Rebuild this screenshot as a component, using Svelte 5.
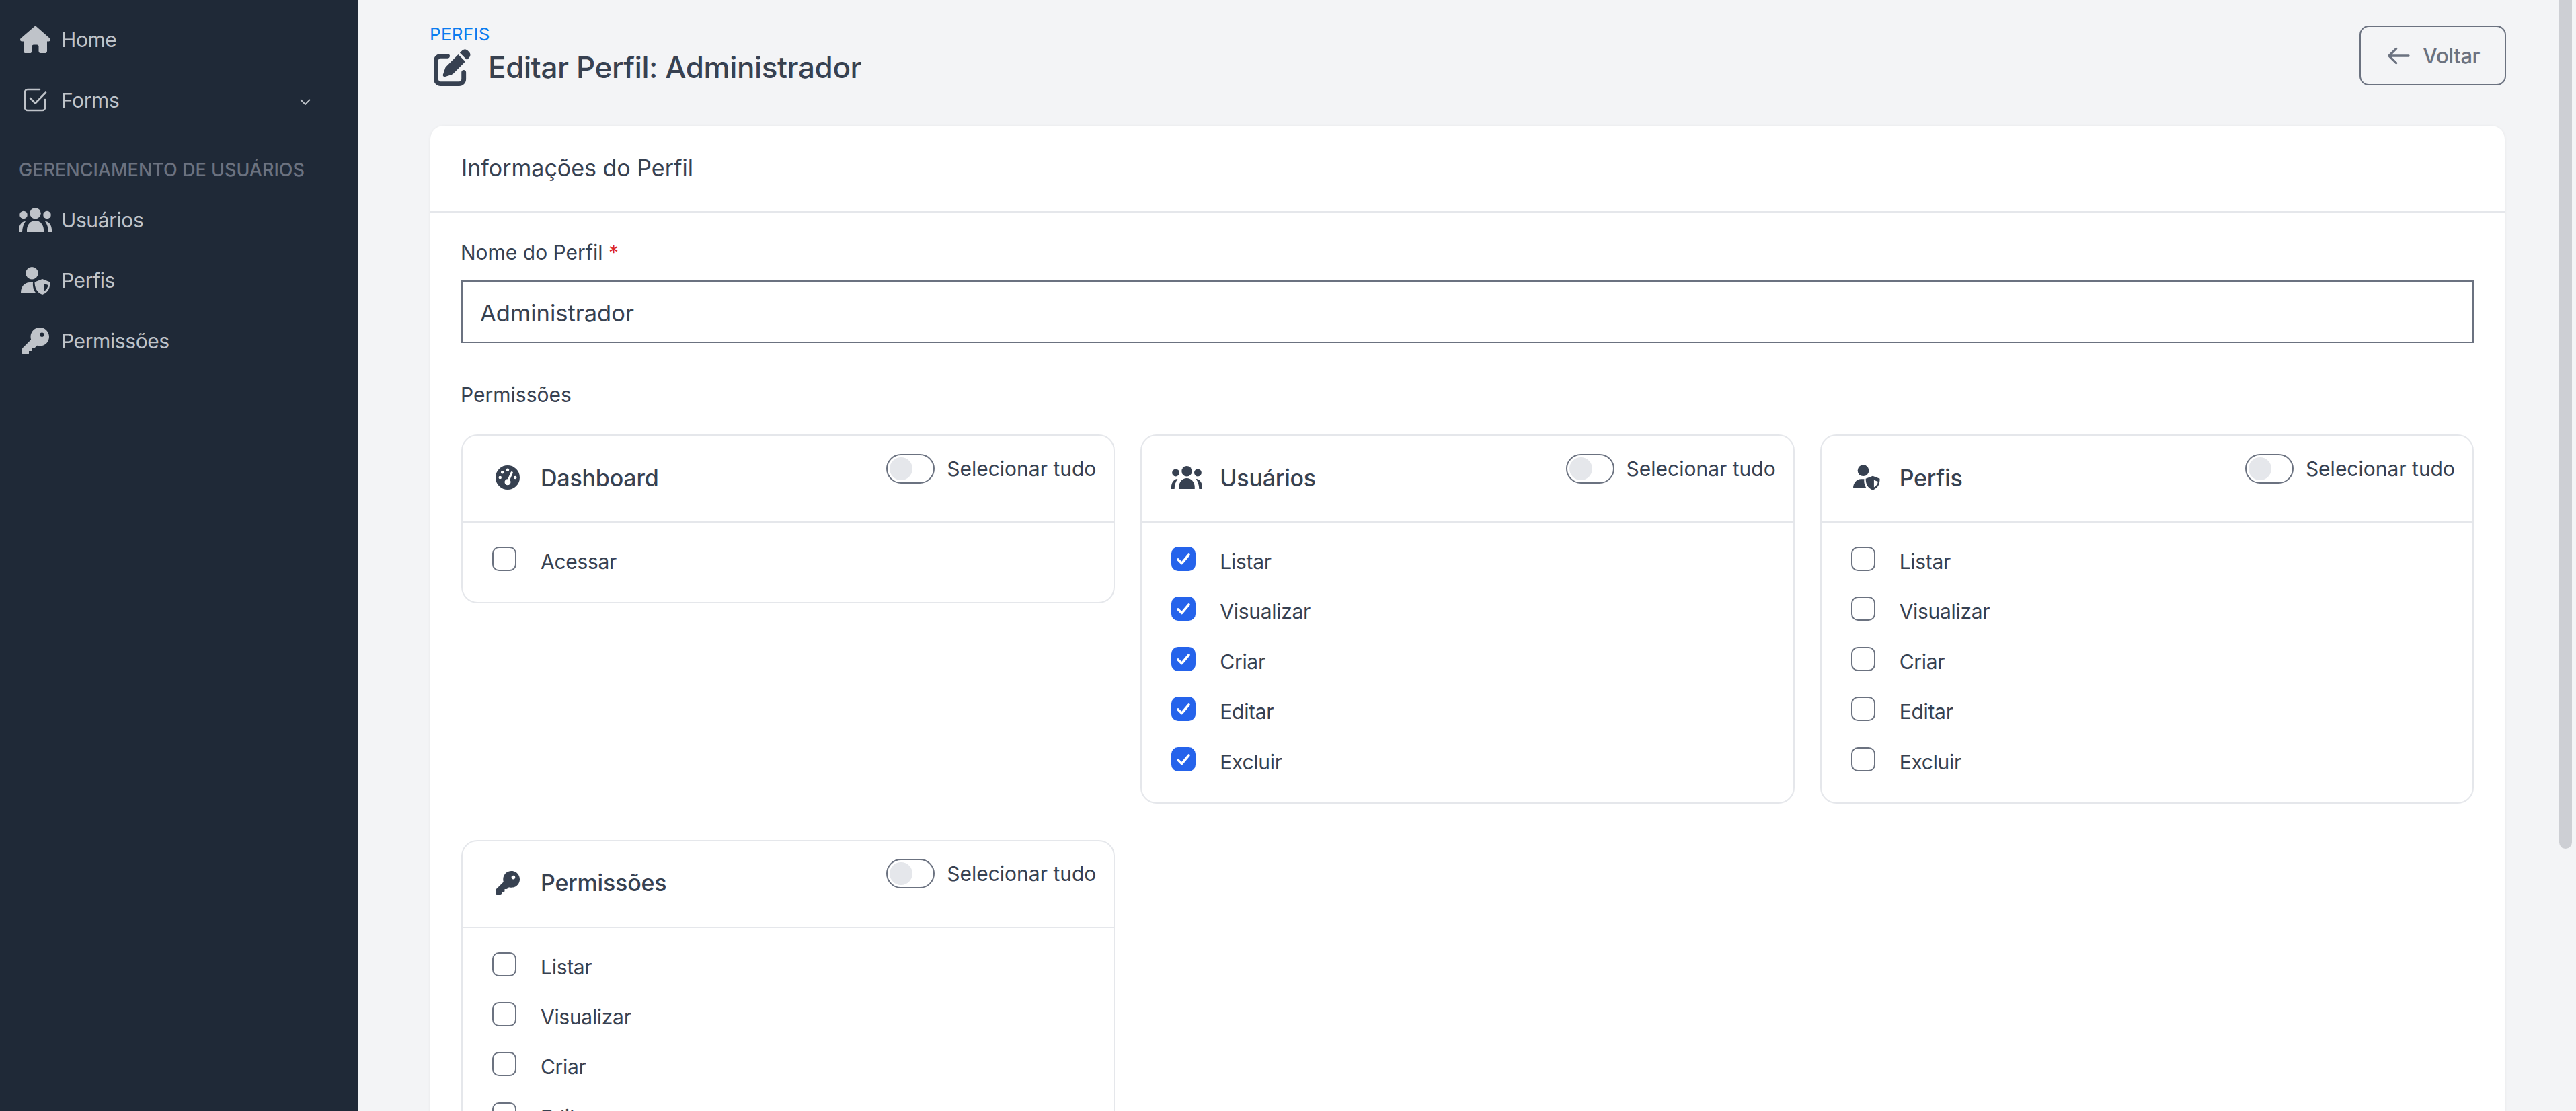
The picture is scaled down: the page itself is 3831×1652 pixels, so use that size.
<script>
  const nav = [
    { label: 'Usuários', icon: 'users' },
    { label: 'Perfis', icon: 'shield' },
    { label: 'Permissões', icon: 'key' }
  ];
  const crud = ['Listar', 'Visualizar', 'Criar', 'Editar', 'Excluir'];
  const groups = [
    { title: 'Dashboard', icon: 'gauge', items: ['Acessar'], checked: false },
    { title: 'Usuários', icon: 'users', items: crud, checked: true },
    { title: 'Perfis', icon: 'shield', items: crud, checked: false },
    { title: 'Permissões', icon: 'key', items: crud, checked: false }
  ];
</script>

{#snippet icon(name)}
  {#if name === 'house'}
    <svg class="i-house" viewBox="0 0 576 512"><path d="M575.8 255.5c0 18-15 32.1-32 32.1h-32l.7 160.2c0 2.7-.2 5.4-.5 8.1V472c0 22.1-17.9 40-40 40H456c-1.1 0-2.2 0-3.3-.1c-1.4 .1-2.8 .1-4.2 .1H416 392c-22.1 0-40-17.9-40-40V448 384c0-17.7-14.3-32-32-32H256c-17.7 0-32 14.3-32 32v64 24c0 22.1-17.9 40-40 40H160 128.1c-1.5 0-3-.1-4.5-.2c-1.2 .1-2.4 .2-3.6 .2H104c-22.1 0-40-17.9-40-40V360c0-.9 0-1.9 .1-2.8V287.6H32c-18 0-32-14-32-32.1c0-9 3-17 10-24L266.4 8c7-7 15-8 22-8s15 2 21 7L564.8 231.5c8 7 12 15 11 24z"/></svg>
  {:else if name === 'forms'}
    <svg class="i-forms" viewBox="0 0 36 36"><path d="M24 2H6a4 4 0 0 0-4 4V29a4 4 0 0 0 4 4H28a4 4 0 0 0 4-4V17M10 15l7.5 7.5L33 6.5" fill="none" stroke="currentColor" stroke-width="2.6" stroke-linecap="round" stroke-linejoin="round"/></svg>
  {:else if name === 'users'}
    <svg class="i-users" viewBox="0 0 49 36">
      <circle cx="24.5" cy="8.2" r="8.2"/>
      <circle cx="7" cy="10.5" r="5.8"/>
      <circle cx="42" cy="10.5" r="5.8"/>
      <path d="M12 36v-3c0-8 5.500-14 12.500-14S37 25 37 33v3z"/>
      <path d="M0 36v-3c0-7 4-13 10-13c-3 4-5 10-5 16z"/>
      <path d="M49 36v-3c0-7-4-13-10-13c3 4 5 10 5 16z"/>
    </svg>
  {:else if name === 'shield'}
    <svg class="i-shield" viewBox="0 0 44 41">
      <circle cx="16.500" cy="9.200" r="9.200"/>
      <path d="M0 38C0 29.500 5.500 23 13 23H18C17.500 28 18.500 34 22 38Z"/>
      <path fill-rule="evenodd" d="M32 18L43.500 22.500C43.500 30.500 41.500 37.500 32 41C23 37.500 20.500 30 20.500 22.500ZM34 24.500V36.500C38 34 40.200 31 40.500 27Z"/>
    </svg>
  {:else if name === 'key'}
    <svg class="i-key" viewBox="0 0 512 512"><path d="M336 352c97.200 0 176-78.800 176-176S433.200 0 336 0S160 78.800 160 176c0 18.700 2.900 36.800 8.300 53.700L7 391c-4.500 4.500-7 10.600-7 17v80c0 13.300 10.700 24 24 24h80c13.300 0 24-10.700 24-24V448h40c13.300 0 24-10.700 24-24V384h40c6.400 0 12.500-2.500 17-7l33.300-33.300c16.900 5.400 35 8.300 53.700 8.300zM376 96a40 40 0 1 1 0 80 40 40 0 1 1 0-80z"/></svg>
  {:else if name === 'gauge'}
    <svg class="i-key" viewBox="0 0 512 512"><path d="M0 256a256 256 0 1 1 512 0A256 256 0 1 1 0 256zM288 96a32 32 0 1 0 -64 0 32 32 0 1 0 64 0zM256 416c35.300 0 64-28.700 64-64c0-17.400-6.900-33.100-18.100-44.600L366 161.700c5.300-12.100-.2-26.300-12.300-31.600s-26.300 .2-31.600 12.300L257.900 288c-.6 0-1.300 0-1.900 0c-35.300 0-64 28.700-64 64s28.700 64 64 64zM176 144a32 32 0 1 0 -64 0 32 32 0 1 0 64 0zM96 288a32 32 0 1 0 0-64 32 32 0 1 0 0 64zm352-32a32 32 0 1 0 -64 0 32 32 0 1 0 64 0z"/></svg>
  {/if}
{/snippet}

<div class="app">
  <aside class="sidebar">
    <a class="nav-item"><span class="nav-icon">{@render icon('house')}</span>Home</a>
    <a class="nav-item">
      <span class="nav-icon">{@render icon('forms')}</span>Forms
      <svg class="chev" viewBox="0 0 16 10"><path d="M1.500 1.500L8 8l6.500-6.500" fill="none" stroke="currentColor" stroke-width="1.800" stroke-linecap="round" stroke-linejoin="round"/></svg>
    </a>
    <div class="nav-section">GERENCIAMENTO DE USUÁRIOS</div>
    {#each nav as n}
      <a class="nav-item"><span class="nav-icon">{@render icon(n.icon)}</span>{n.label}</a>
    {/each}
  </aside>

  <main class="main">
    <header class="page-head">
      <div>
        <div class="crumb">PERFIS</div>
        <h1 class="page-title">
          <svg class="i-edit" viewBox="0 0 512 512"><path d="M471.600 21.700c-21.900-21.900-57.300-21.900-79.200 0L362.300 51.700l97.900 97.900 30.100-30.100c21.900-21.900 21.900-57.300 0-79.200L471.600 21.700zm-299.200 220c-6.100 6.100-10.800 13.600-13.500 21.900l-29.600 88.800c-2.900 8.600-.6 18.100 5.800 24.600s15.900 8.700 24.600 5.800l88.800-29.600c8.200-2.700 15.700-7.400 21.900-13.500L437.700 172.300 339.700 74.300 172.400 241.700zM96 64C43 64 0 107 0 160V416c0 53 43 96 96 96H352c53 0 96-43 96-96V320c0-17.700-14.300-32-32-32s-32 14.300-32 32v96c0 17.700-14.300 32-32 32H96c-17.700 0-32-14.300-32-32V160c0-17.700 14.300-32 32-32h96c17.700 0 32-14.300 32-32s-14.300-32-32-32H96z"/></svg>
          Editar Perfil: Administrador
        </h1>
      </div>
      <button class="back">
        <svg class="i-arrow" viewBox="0 0 34 26"><path d="M32 13H3M13 2L2 13l11 11" fill="none" stroke="currentColor" stroke-width="3.400" stroke-linecap="round" stroke-linejoin="round"/></svg>
        Voltar
      </button>
    </header>

    <section class="card">
      <div class="card-head">Informações do Perfil</div>
      <div class="card-body">
        <label class="field-label" for="nome">Nome do Perfil <span class="req">*</span></label>
        <input id="nome" class="field" value="Administrador" />
        <div class="perm-label">Permissões</div>
        <div class="perm-grid">
          {#each groups as g}
            <div class="perm-card">
              <div class="perm-head">
                <div class="perm-title">
                  <span class="perm-icon">{@render icon(g.icon)}</span>{g.title}
                </div>
                <div class="select-all">
                  <span class="toggle"><span class="knob"></span></span>
                  Selecionar tudo
                </div>
              </div>
              <div class="perm-body">
                {#each g.items as item}
                  <div class="perm-row">
                    <span class="check" class:on={g.checked}>
                      {#if g.checked}
                        <svg viewBox="0 0 36 36"><path d="M10 19l5.500 5.500L26 12" fill="none" stroke="#fff" stroke-width="3.600" stroke-linecap="round" stroke-linejoin="round"/></svg>
                      {/if}
                    </span>
                    {item}
                  </div>
                {/each}
              </div>
            </div>
          {/each}
        </div>
      </div>
    </section>
  </main>

  <div class="scroll-thumb"></div>
</div>

<style>
  :global(body) {
    margin: 0;
    background: #f3f4f6;
    font-family: Inter, 'Noto Sans', sans-serif;
    color: #374151;
  }
  svg {
    display: block;
    fill: currentColor;
  }
  .app {
    position: relative;
    display: flex;
    height: 100vh;
    overflow: hidden;
  }
  .sidebar {
    flex: 0 0 532px;
    background: #1f2937;
    color: #bfc3c9;
    padding-top: 14px;
    box-sizing: border-box;
  }
  .nav-item {
    display: flex;
    align-items: center;
    height: 90px;
    padding-left: 28px;
    font-size: 30px;
    letter-spacing: -0.4px;
  }
  .nav-icon {
    flex: 0 0 49px;
    display: flex;
    justify-content: center;
    margin-right: 14px;
  }
  .chev {
    width: 16px;
    height: 10px;
    margin-left: auto;
    margin-right: 70px;
    margin-top: 6px;
  }
  .nav-section {
    padding: 42px 0 12px 28px;
    height: 34px;
    line-height: 34px;
    font-size: 27px;
    font-weight: 500;
    color: #6b7280;
    white-space: nowrap;
  }
  .i-house { width: 45px; height: 40px; }
  .i-forms { width: 36px; height: 36px; }
  .i-users { width: 49px; height: 36px; }
  .i-shield { width: 44px; height: 41px; }
  .i-key { width: 40px; height: 40px; }
  .main {
    flex: 1;
    min-width: 0;
    padding: 36px 106px 0 108px;
  }
  .page-head {
    display: flex;
    justify-content: space-between;
    align-items: flex-start;
    margin-bottom: 53px;
  }
  .crumb {
    height: 30px;
    line-height: 30px;
    font-size: 26px;
    letter-spacing: 0.3px;
    margin-left: -1px;
    color: #0a7cf0;
  }
  .page-title {
    display: flex;
    align-items: center;
    height: 68px;
    margin: 0;
    font-size: 44px;
    font-weight: 500;
    letter-spacing: -0.4px;
    color: #374151;
  }
  .i-edit {
    width: 55px;
    height: 55px;
    margin: 0 26px 0 5px;
  }
  .back {
    display: flex;
    align-items: center;
    box-sizing: border-box;
    width: 218px;
    height: 89px;
    margin: 2px -2px 0 0;
    padding: 0 0 0 40px;
    background: transparent;
    border: 2px solid #6b7280;
    border-radius: 14px;
    color: #6b7280;
    font-family: inherit;
    font-size: 31px;
    font-weight: 500;
    letter-spacing: -0.4px;
  }
  .i-arrow {
    width: 33px;
    height: 26px;
    margin-right: 19px;
  }
  .card {
    box-sizing: border-box;
    background: #fff;
    border-radius: 20px 20px 0 0;
    box-shadow: 0 1px 4px rgba(0, 0, 0, 0.08);
    min-height: 1600px;
  }
  .card-head {
    box-sizing: border-box;
    height: 129px;
    padding-left: 46px;
    line-height: 125px;
    font-size: 34px;
    border-bottom: 2px solid #e5e7eb;
  }
  .card-body {
    padding: 37px 46px 0 46px;
  }
  .field-label {
    display: block;
    height: 44px;
    line-height: 44px;
    margin-bottom: 20px;
    font-size: 30px;
    text-indent: -1px;
  }
  .req {
    color: #dc2626;
  }
  .field {
    display: block;
    box-sizing: border-box;
    width: 100%;
    height: 93px;
    padding: 4px 26px 0;
    border: 2px solid #6b7280;
    border-radius: 0;
    outline: none;
    font-family: inherit;
    font-size: 34.5px;
    color: #374151;
  }
  .perm-label {
    height: 44px;
    line-height: 44px;
    margin: 55px 0 37px;
    font-size: 30px;
    text-indent: -1px;
  }
  .perm-grid {
    display: grid;
    grid-template-columns: repeat(3, 1fr);
    gap: 54px 38px;
    align-items: start;
  }
  .perm-card {
    border: 2px solid #e5e7eb;
    border-radius: 24px;
    background: #fff;
  }
  .perm-head {
    display: flex;
    justify-content: space-between;
    box-sizing: border-box;
    height: 129px;
    padding: 26px 26px 0 44px;
    border-bottom: 2px solid #e5e7eb;
  }
  .perm-title {
    display: flex;
    align-items: center;
    height: 74px;
    font-size: 34px;
    font-weight: 500;
    margin-top: -1px;
    letter-spacing: -0.2px;
  }
  .perm-icon {
    flex: 0 0 46px;
    display: flex;
    justify-content: center;
    margin-right: 26px;
  }
  .perm-icon :global(svg) {
    max-width: 46px;
  }
  .perm-icon .i-users { width: 46px; height: 34px; }
  .perm-icon .i-shield { width: 40px; height: 38px; }
  .perm-icon .i-key { width: 36px; height: 36px; }
  .select-all {
    display: flex;
    align-items: center;
    gap: 18px;
    height: 45px;
    font-size: 30px;
  }
  .toggle {
    position: relative;
    display: block;
    box-sizing: border-box;
    width: 72px;
    height: 44px;
    background: #fff;
    border: 2px solid #6b7280;
    border-radius: 22px;
  }
  .knob {
    position: absolute;
    top: 3px;
    left: 3px;
    width: 34px;
    height: 34px;
    border-radius: 50%;
    background: #e5e7eb;
  }
  .perm-body {
    display: flex;
    flex-direction: column;
    gap: 27.4px;
    padding: 35px 44px 36px 44px;
  }
  .perm-row {
    display: flex;
    align-items: flex-start;
    height: 47px;
    line-height: 47px;
    font-size: 30px;
    letter-spacing: -0.3px;
  }
  .check {
    flex: 0 0 36px;
    box-sizing: border-box;
    width: 36px;
    height: 36px;
    margin-top: 1px;
    margin-right: 36px;
    border: 2px solid #6b7280;
    border-radius: 10px;
    background: #fff;
  }
  .check.on {
    border: 0;
    background: #2563eb;
  }
  .scroll-thumb {
    position: absolute;
    top: 0;
    right: 6px;
    width: 19px;
    height: 1262px;
    background: #cdcfd4;
    border-radius: 0 0 10px 10px;
  }
</style>
